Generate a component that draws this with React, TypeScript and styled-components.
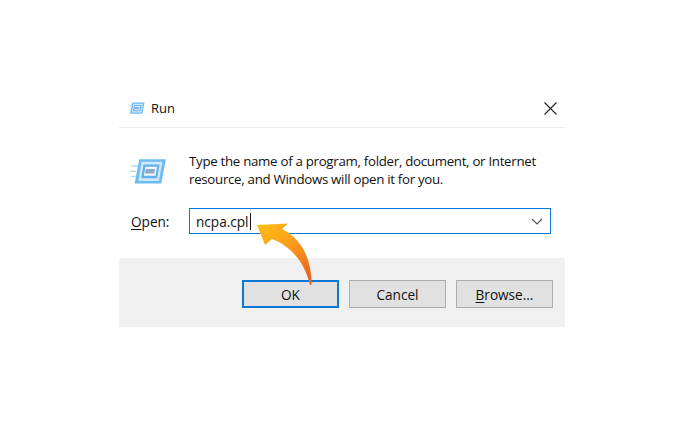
import React from "react";
import styled, { createGlobalStyle } from "styled-components";

const GlobalStyle = createGlobalStyle`
    html, body {
        margin: 0;
        background: #ffffff;
    }
`;

const Page = styled.div`
    width: 700px;
    height: 430px;
    padding: 90px 0 0 119px;
    box-sizing: border-box;
    overflow: hidden;
`;

const Dialog = styled.div`
    position: relative;
    width: 446px;
    font-family: "Open Sans", "Noto Sans", sans-serif;
    color: #111111;
`;

const TitleBar = styled.div`
    height: 37px;
    display: flex;
    align-items: center;
    padding: 0 8px 0 9px;
    gap: 6px;
    border-bottom: 1px solid #ececec;
`;

const TitleText = styled.span`
    font-size: 13px;
    flex: 1;
    margin-bottom: 1px;
`;

const CloseIcon = styled.svg`
    width: 13px;
    height: 13px;
`;

const Body = styled.div`
    height: 130px;
    padding: 24px 14px 0 11px;
    box-sizing: border-box;
`;

const InfoRow = styled.div`
    display: flex;
    gap: 22px;
    height: 56px;
`;

const IconSlot = styled.div`
    padding-top: 6px;
`;

const InfoText = styled.p`
    margin: 0;
    font-size: 13.3px;
    line-height: 18px;
    letter-spacing: -0.3px;
    width: 355px;
`;

const OpenRow = styled.div`
    display: flex;
    align-items: center;
    padding-left: 1px;
`;

const OpenLabel = styled.label`
    width: 58px;
    font-size: 13.6px;
`;

const Underlined = styled.span`
    text-decoration: underline;
    text-underline-offset: 2px;
    text-decoration-thickness: 1px;
`;

const ComboBox = styled.div`
    width: 362px;
    height: 26px;
    box-sizing: border-box;
    border: 1px solid #0a78d4;
    display: flex;
    align-items: center;
    justify-content: space-between;
    padding: 0 7px 0 6px;
    font-size: 13.6px;
`;

const InputText = styled.span`
    display: flex;
    align-items: center;
`;

const Caret = styled.span`
    display: inline-block;
    width: 1px;
    height: 17px;
    background: #111111;
    margin-left: 1px;
`;

const Footer = styled.div`
    height: 69px;
    background: #f0f0f0;
    display: flex;
    justify-content: flex-end;
    align-items: flex-start;
    gap: 10px;
    padding: 22px 12px 0 0;
    box-sizing: border-box;
`;

const Button = styled.button<{ $primary?: boolean }>`
    width: 97px;
    height: 28px;
    padding: 0;
    box-sizing: border-box;
    background: #e1e1e1;
    border: ${({ $primary }) => ($primary ? "2px solid #0a78d4" : "1px solid #adadad")};
    font-family: inherit;
    font-size: 13.6px;
    color: #111111;
`;

const Arrow = styled.svg`
    position: absolute;
    left: 131px;
    top: 125px;
    width: 70px;
    height: 80px;
`;

// the blue Run glyph, scaled for the title bar and the body
const RunIcon: React.FC<{ size: number }> = ({ size }) => (
    <svg width={size} height={size * 0.72} viewBox="0 0 32 23" style={{ display: "block", flexShrink: 0 }}>
        <path d="M1 7h6M0 11.5h5M1 16h4" stroke="#b5daf5" strokeWidth="1.3" />
        <path d="M8 1H31L27 22H4Z" fill="#6dbbf0" />
        <path d="M10 3.2H28L25 19.8H7.3Z" fill="#d2e9fa" />
        <path d="M11.6 5.5H25.6L23.5 17.5H9.6Z" fill="#62b2ec" />
        <path d="M13.4 7.5H23.3L22 15.3H12Z" fill="#f2f9fe" />
        <path d="M13.6 9.6H21.6L21 13.4H13Z" fill="#8fa9c6" />
    </svg>
);

const App: React.FC = () => {
    return (
        <>
            <GlobalStyle />
            <Page>
                <Dialog>
                    <TitleBar>
                        <RunIcon size={17} />
                        <TitleText>Run</TitleText>
                        <CloseIcon viewBox="0 0 13 13">
                            <path d="M0.5 0.5L12.5 12.5M12.5 0.5L0.5 12.5" stroke="#222222" strokeWidth="1.1" fill="none" />
                        </CloseIcon>
                    </TitleBar>
                    <Body>
                        <InfoRow>
                            <IconSlot>
                                <RunIcon size={37} />
                            </IconSlot>
                            <InfoText>
                                Type the name of a program, folder, document, or Internet resource, and Windows will open it for you.
                            </InfoText>
                        </InfoRow>
                        <OpenRow>
                            <OpenLabel>
                                <Underlined>O</Underlined>pen:
                            </OpenLabel>
                            <ComboBox>
                                <InputText>
                                    ncpa.cpl
                                    <Caret />
                                </InputText>
                                <svg width="12" height="7" viewBox="0 0 12 7">
                                    <path d="M1 1L6 6L11 1" stroke="#555555" strokeWidth="1.1" fill="none" />
                                </svg>
                            </ComboBox>
                        </OpenRow>
                    </Body>
                    <Footer>
                        <Button $primary>OK</Button>
                        <Button>Cancel</Button>
                        <Button>
                            <Underlined>B</Underlined>rowse...
                        </Button>
                    </Footer>
                    <Arrow viewBox="0 0 70 80">
                        <defs>
                            <linearGradient id="arrowFill" x1="0.1" y1="0" x2="0.75" y2="1">
                                <stop offset="0" stopColor="#ffbb14" />
                                <stop offset="0.45" stopColor="#fb9f1b" />
                                <stop offset="1" stopColor="#ea631f" />
                            </linearGradient>
                        </defs>
                        <path
                            d="M7 10 L38 8.5 L32 14 C51 23 62 44 61.5 70 L60 70 C55 48 41 31 22 24 L15 30 Z"
                            fill="url(#arrowFill)"
                        />
                    </Arrow>
                </Dialog>
            </Page>
        </>
    );
};

export default App;
